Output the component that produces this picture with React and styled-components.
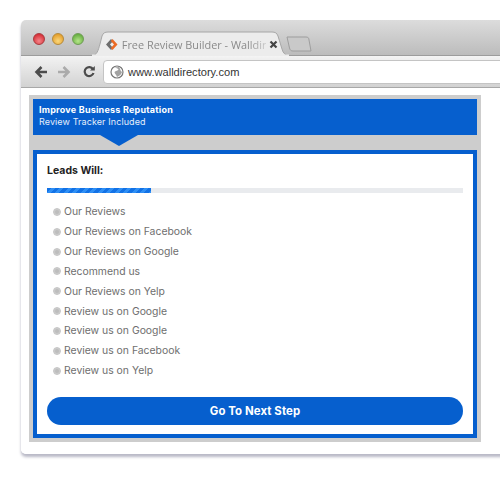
import React from "react";
import styled, { createGlobalStyle } from "styled-components";

const Global = createGlobalStyle`
  html, body { margin: 0; padding: 0; background: #fff; overflow: hidden; }
  * { box-sizing: border-box; }
`;
const Page = styled.div`
  width: 500px; height: 483px; padding: 20px 0 0 21px; overflow: hidden;
  font-family: "Inter", "Liberation Sans", sans-serif;
`;
const Window = styled.div`
  width: 490px; height: 434px; background: #fff; border-radius: 5px 5px 0 5px;
  box-shadow: 0 3px 3px #b9b9c6; display: flex; flex-direction: column; overflow: hidden;
`;
const TabStrip = styled.div`
  height: 36px; flex: none; display: flex; align-items: flex-end;
  background: linear-gradient(#dcdcdc, #bcbcbc); border-bottom: 1px solid #9c9c9c; padding-left: 12px;
`;
const Lights = styled.div`display: flex; gap: 7.4px; align-self: flex-start; margin-top: 13px;`;
const Light = styled.span`
  width: 12px; height: 12px; border-radius: 50%; border: 1px solid ${p => p.$edge};
  background: radial-gradient(circle at 50% 70%, ${p => p.$glow}, ${p => p.$color} 75%);
`;
const Tab = styled.div`
  position: relative; width: 197px; height: 25px; margin: 0 0 -1px 8px; flex: none;
  display: flex; align-items: center; padding: 2px 0 0 13px;
`;
const TabShape = styled.svg`position: absolute; inset: 0;`;
const Favicon = styled.svg`position: relative; flex: none;`;
const TabTitle = styled.span`
  position: relative; width: 144px; margin-left: 4px; white-space: nowrap;
  font: 10.9px "Open Sans", sans-serif; color: #8a8a8a;
  -webkit-mask-image: linear-gradient(90deg, #000 88%, rgba(0,0,0,.3));
`;
const Close = styled.svg`position: relative; margin-left: 3px; flex: none;`;
const NewTab = styled.svg`margin: 0 0 3px -3px; flex: none;`;
const Toolbar = styled.div`
  height: 32px; flex: none; display: flex; align-items: center; padding: 0 0 0 13px;
  background: linear-gradient(#f4f4f4 0, #f0f0f0 8%, #d2d2d2 100%); border-bottom: 1px solid #a8a8a8;
`;
const NavIcon = styled.svg`flex: none; margin-right: ${p => p.$gap}px;`;
const Url = styled.div`
  flex: 1; height: 24px; background: #fff; border-radius: 4px 0 0 4px; border: 1px solid #c4c4c4;
  display: flex; align-items: center; padding-left: 6px; gap: 4px;
  font: 11.1px "Liberation Sans", sans-serif; color: #333;
`;
const Content = styled.div`flex: 1; padding: 7px 0 0 8px; background: #fff;`;
const Panel = styled.div`width: 452px; height: 347px; background: #cdcdcd; padding: 4px;`;
const Banner = styled.div`
  position: relative; height: 36px; background: #065fce; color: #fff; padding: 5px 0 0 6px;
  &::after {
    content: ""; position: absolute; left: 67px; top: 36px; border-style: solid;
    border-width: 11px 19px 0; border-color: #065fce transparent transparent;
  }
`;
const BannerTitle = styled.div`font-size: 9px; font-weight: 700; line-height: 12px; letter-spacing: .22px;`;
const BannerSub = styled.div`font-size: 9px; font-weight: 400; line-height: 12px; letter-spacing: .1px; color: #e4eefb;`;
const Card = styled.div`
  margin-top: 15px; height: 288px; background: #fff; border: 4px solid #065fce; padding: 10px 10px 0;
`;
const Heading = styled.div`font-size: 10.5px; font-weight: 700; color: #222; line-height: 14px;`;
const Track = styled.div`height: 5px; margin-top: 10px; background: #e9ebee;`;
const Fill = styled.div`
  height: 100%; background: repeating-linear-gradient(135deg, #1272e6 0 3px, #2f8ff5 3px 6px);
`;
const List = styled.ul`list-style: none; margin: 9px 0 0; padding: 0 0 0 6px;`;
const Item = styled.li`
  height: 19.85px; display: flex; align-items: center; gap: 3px;
  font-size: 10.4px; color: #6e6e6e; letter-spacing: 0;
`;
const Radio = styled.span`
  width: 8px; height: 8px; border-radius: 50%; flex: none; border: 1px solid #c4c4c4;
  background: radial-gradient(circle, #bdbdbd 35%, #e2e2e2);
`;
const Next = styled.button`
  display: block; width: 416px; height: 28px; margin-top: 16px; border: 0; border-radius: 14px;
  background: #065fce; color: #fff; font: 700 11.4px "Inter", sans-serif; letter-spacing: .1px;
`;

const items = ["Our Reviews","Our Reviews on Facebook","Our Reviews on Google","Recommend us","Our Reviews on Yelp","Review us on Google","Review us on Google","Review us on Facebook","Review us on Yelp"];

export default function App() {
  return (
    <Page>
      <Global />
      <Window>
        <TabStrip>
          <Lights>
            <Light $color="#d8323a" $glow="#f5868a" $edge="#a83a3e" />
            <Light $color="#e5a02e" $glow="#fbd87c" $edge="#b58a3a" />
            <Light $color="#69b043" $glow="#b6e68a" $edge="#6f9c55" />
          </Lights>
          <Tab>
            <TabShape width="197" height="25" viewBox="0 0 197 25">
              <path d="M0 25 C5 24 6 20 8 13 L10 5 C11 2 13 1 16 1 L180 1 C183 1 185 2 186 5 L190 18 C191 22 193 24 197 25 Z" fill="#ececec" stroke="#a6a6a6" />
              <path d="M0 24.5 L197 24.5" stroke="#ececec" strokeWidth="2" />
            </TabShape>
            <Favicon width="13" height="13" viewBox="0 0 13 13">
              <path d="M6 1 L1 6.5 L6 12 L8 10 L5 6.5 L8 3 Z" fill="#6e6e6e" />
              <path d="M7.5 1 L12.5 6.5 L7.5 12 L5.8 10 L9 6.5 L5.8 3 Z" fill="#ea6a25" />
            </Favicon>
            <TabTitle>Free Review Builder - Walldir</TabTitle>
            <Close width="9" height="9" viewBox="0 0 9 9">
              <path d="M1.5 1.5 L7.5 7.5 M7.5 1.5 L1.5 7.5" stroke="#444" strokeWidth="2.2" />
            </Close>
          </Tab>
          <NewTab width="26" height="16" viewBox="0 0 26 16">
            <path d="M1 1 L20 1 C22 1 23 2 23 4 L25 15 L7 15 C5 15 4 14 3.5 12 Z" fill="#c9c9c9" stroke="#9d9d9d" />
          </NewTab>
        </TabStrip>
        <Toolbar>
          <NavIcon $gap={9} width="14" height="14" viewBox="0 0 14 14">
            <path d="M13 7 L3 7 M7.5 2 L2.5 7 L7.5 12" fill="none" stroke="#4c4c4c" strokeWidth="2.6" />
          </NavIcon>
          <NavIcon $gap={12} width="14" height="14" viewBox="0 0 14 14">
            <path d="M1 7 L11 7 M6.5 2 L11.5 7 L6.5 12" fill="none" stroke="#ababab" strokeWidth="2.6" />
          </NavIcon>
          <NavIcon $gap={8} width="12" height="12" viewBox="0 0 12 12">
            <path d="M10 3.2 A4.5 4.5 0 1 0 10.5 7" fill="none" stroke="#4c4c4c" strokeWidth="2.2" />
            <path d="M7 4.6 L11.8 4.6 L11.8 0 Z" fill="#4c4c4c" />
          </NavIcon>
          <Url>
            <svg width="14" height="14" viewBox="0 0 14 14">
              <circle cx="7" cy="7" r="6" fill="#fff" stroke="#777" strokeWidth="1.2" />
              <path d="M4 2.5 C6 3 8 3 8.5 4.5 C8 6 5.5 5.5 4.5 7 C4.5 9 6.5 9.5 7 12 C9.5 11 11.5 9 12 7 C10 6 10.5 3.5 9 2 Z" fill="#a2a2a2" />
            </svg>
            www.walldirectory.com
          </Url>
        </Toolbar>
        <Content>
          <Panel>
            <Banner>
              <BannerTitle>Improve Business Reputation</BannerTitle>
              <BannerSub>Review Tracker Included</BannerSub>
            </Banner>
            <Card>
              <Heading>Leads Will:</Heading>
              <Track><Fill style={{ width: "25%" }} /></Track>
              <List>
                {items.map((t, i) => <Item key={i}><Radio />{t}</Item>)}
              </List>
              <Next>Go To Next Step</Next>
            </Card>
          </Panel>
        </Content>
      </Window>
    </Page>
  );
}
